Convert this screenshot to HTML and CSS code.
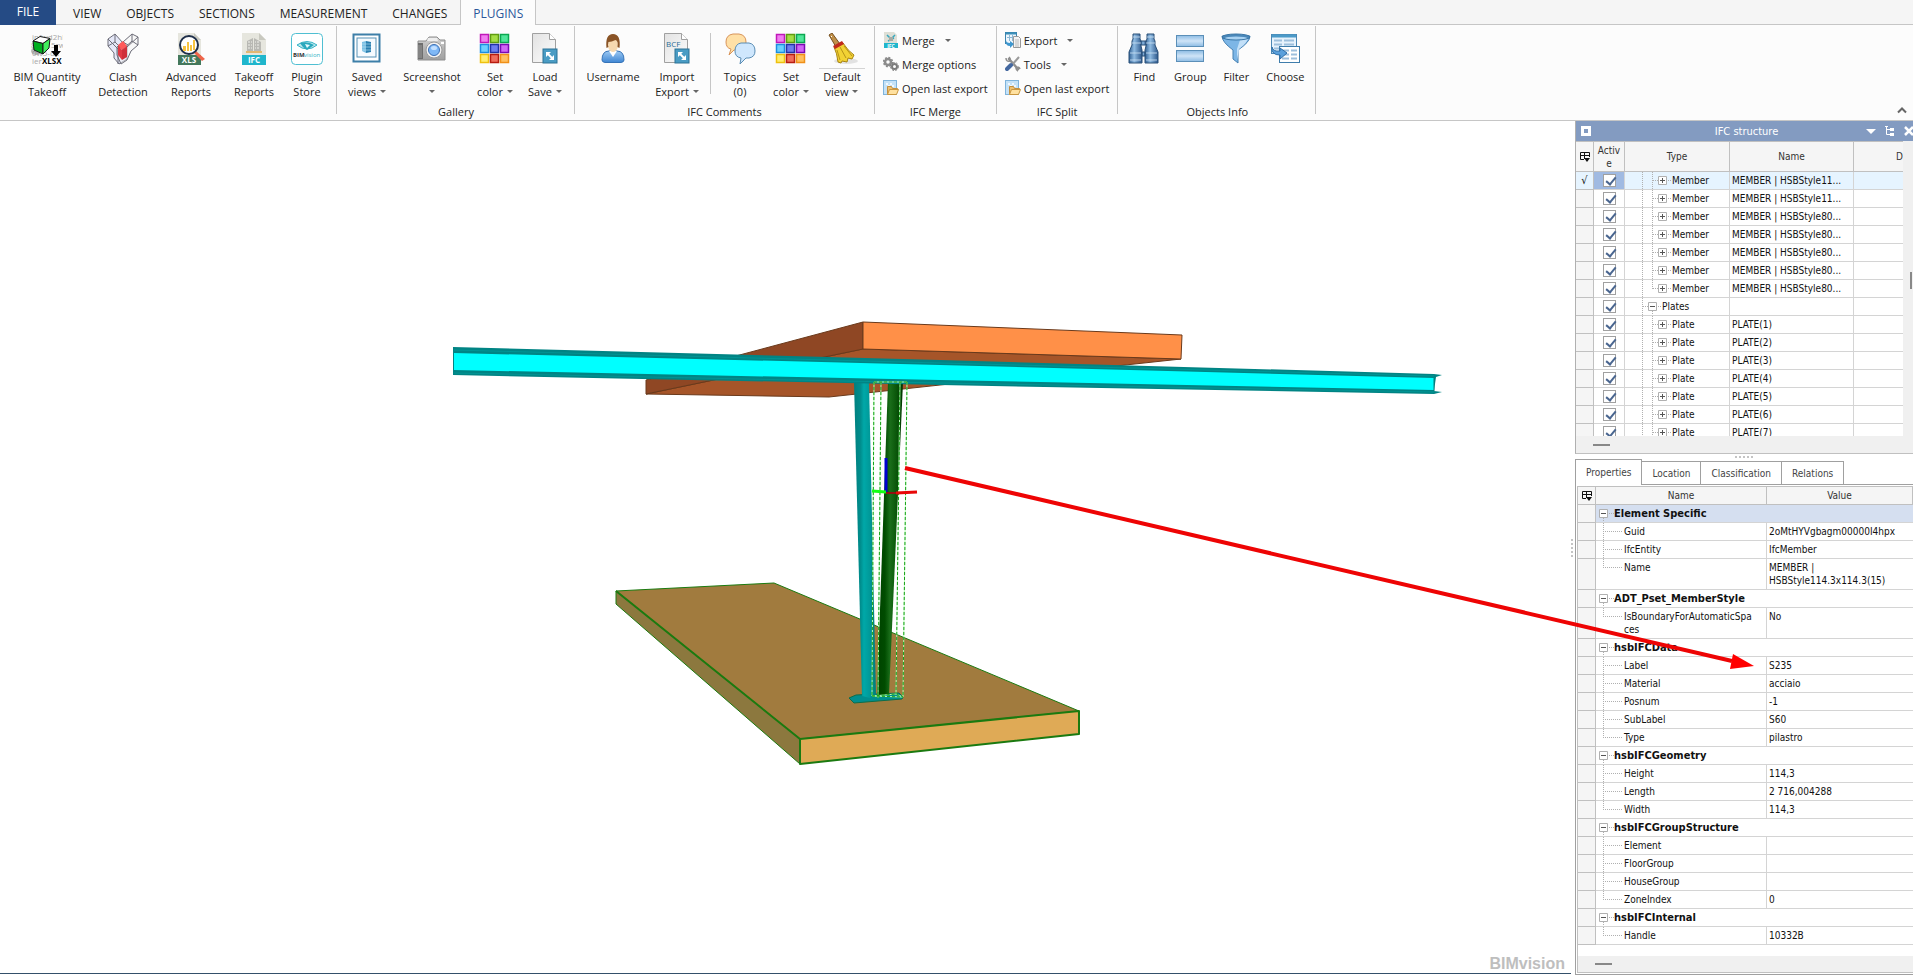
FILE: index.html
```html
<!DOCTYPE html>
<html lang="en">
<head>
<meta charset="utf-8">
<title>BIMvision</title>
<link rel="stylesheet" href="styles.css">
</head>
<body>
<svg class="defs" aria-hidden="true">
  <defs>
    <linearGradient id="blue" x1="0" y1="0" x2="0" y2="1"><stop offset="0" stop-color="#8dbce4"/><stop offset=".5" stop-color="#cfe4f7"/><stop offset="1" stop-color="#8dbce4"/></linearGradient>
    <linearGradient id="steel" x1="0" y1="0" x2="1" y2="0"><stop offset="0" stop-color="#2f5f93"/><stop offset=".4" stop-color="#8fbbe2"/><stop offset="1" stop-color="#2b568a"/></linearGradient>
    <linearGradient id="paper" x1="0" y1="0" x2="1" y2="1"><stop offset="0" stop-color="#e2e2e2"/><stop offset="1" stop-color="#fdfdfd"/></linearGradient>
    <linearGradient id="metal" x1="0" y1="0" x2="0" y2="1"><stop offset="0" stop-color="#d6d6d6"/><stop offset=".5" stop-color="#b4b4b4"/><stop offset="1" stop-color="#a0a0a0"/></linearGradient>
    <linearGradient id="shirt" x1="0" y1="0" x2="0" y2="1"><stop offset="0" stop-color="#9cc9f3"/><stop offset="1" stop-color="#3f86d3"/></linearGradient>
    <linearGradient id="tube" x1="0" y1="0" x2="1" y2="0"><stop offset="0" stop-color="#00807f"/><stop offset=".3" stop-color="#008e8e"/><stop offset=".45" stop-color="#00a8a8"/><stop offset=".7" stop-color="#009a9a"/><stop offset="1" stop-color="#007c7c"/></linearGradient>
    <linearGradient id="greentube" x1="0" y1="0" x2="1" y2="0"><stop offset="0" stop-color="#004200"/><stop offset=".3" stop-color="#004c00"/><stop offset=".5" stop-color="#1a6e1a"/><stop offset=".75" stop-color="#0a560a"/><stop offset="1" stop-color="#003400"/></linearGradient>

    <symbol id="i-quantity" viewBox="0 0 32 32">
      <g font-family="Open Sans, sans-serif" font-size="8" fill="#a8a8a8"><text x="1" y="7">infwd2hK</text><text x="0" y="15">8d</text><text x="20" y="15">5rw</text><text x="1" y="23">0w5-dk</text><text x="1" y="31">ierj</text></g>
      <ellipse cx="5" cy="18" rx="5" ry="4" fill="#777" opacity=".5"/>
      <path d="M2 8 9 3.500 19 5.500 12 10.500z" fill="#fff" stroke="#1a1a1a"/>
      <path d="M2 8 12 10.500V21L3 17z" fill="#00b020" stroke="#1a1a1a"/>
      <path d="M12 10.500 19 5.500 18 15 12 21z" fill="#42f05c" stroke="#1a1a1a"/>
      <path d="M23 12h4v6h3l-5 6-5-6h3z" fill="#000"/>
      <text x="11" y="31" font-family="Open Sans, sans-serif" font-size="8" font-weight="700" fill="#000" stroke="#fff" stroke-width="2" paint-order="stroke">XLSX</text>
    </symbol>
    <symbol id="i-clash" viewBox="0 0 32 32">
      <g stroke="#6d6d78" stroke-linejoin="round" fill="#dfe2f6" fill-opacity=".8">
        <path d="M1 6 8 1 16 10 20 14V26L12 31 7 25V20L1 13z"/>
        <path d="M31 4 25 1 16 9 10 14V22L14 31 20 27 24 18 31 12z" fill="#f4f4f4" fill-opacity=".5"/>
        <path d="M1 6 11 16V31M8 1V9L1 13M11 16 16 10M31 4 20 14M25 1V8L31 12M25 8 15 17M16 9 21 12M8 9 16 17" fill="none"/>
      </g>
      <path d="M11 12 16 8 20 13 15 17z" fill="#ff5a5a"/><path d="M11 12 15 17V27L11 22z" fill="#e03a44"/><path d="M15 17 20 13V24L15 27z" fill="#cf2f3a"/>
    </symbol>
    <symbol id="i-xls" viewBox="0 0 32 32">
      <path d="M3 0h16l7 7v25H3z" fill="#e6e6de"/><path d="M19 0v7h7z" fill="#c9c9c0"/>
      <rect x="3" y="22" width="23" height="10" fill="#44785c"/>
      <path d="m21 18 9 8-3 2-8-8z" fill="#f0654a"/>
      <circle cx="14" cy="12" r="9" fill="#fff" stroke="#1f2f4a" stroke-width="2"/>
      <path d="M8 13h3v5H8zm4-4h2v9h-2zm3 3h2v6h-2zm3-5h2v10h-2z" fill="#f6c341"/>
      <text x="14" y="30" font-family="Open Sans, sans-serif" font-size="8" font-weight="700" text-anchor="middle" fill="#fff">XLS</text>
    </symbol>
    <symbol id="i-ifc" viewBox="0 0 32 32">
      <path d="M4 0h17l7 7v25H4z" fill="#e6e6de"/><path d="M21 0v7h7z" fill="#c9c9c0"/>
      <path d="M9 8 15 5v13H9zM16 5l7 4v9h-7z" fill="#b9b9b4"/>
      <path d="M10 9h2m1 0h1m-4 3h2m1 0h1m-4 3h2m1 0h1m3-6h1m1 0h2m-4 3h1m1 0h2m-4 3h1m1 0h2" stroke="#f1f1ec" fill="none"/>
      <path d="M8 18h16v2H8z" fill="#e2b872"/>
      <rect x="4" y="22" width="24" height="10" fill="#20b6cc"/>
      <text x="16" y="30" font-family="Open Sans, sans-serif" font-size="8" font-weight="700" text-anchor="middle" fill="#fff">IFC</text>
    </symbol>
    <symbol id="i-store" viewBox="0 0 32 32">
      <rect x=".5" y=".5" width="31" height="31" rx="4" fill="#fff" stroke="#4fbfd2"/>
      <path d="M6 12q10-7 20 0-10 8-20 0z" fill="#bfe8ee" stroke="#35b3c6"/><path d="M9 10q8-2 14 2l-7 5q-5-3-7-7z" fill="#2aa8bd"/><path d="m14 11 5 1-3 3z" fill="#e8fafc"/>
      <text x="2" y="24" font-family="Open Sans, sans-serif" font-size="6" font-weight="700" fill="#333">BIM</text><text x="13" y="24" font-family="Open Sans, sans-serif" font-size="6" fill="#35b3c6">vision</text>
    </symbol>
    <symbol id="i-views" viewBox="0 0 32 32">
      <rect x="2.500" y="1.500" width="26" height="27" fill="#fff" stroke="#3d7fa8" stroke-width="2"/><rect x="6" y="5" width="19" height="19" fill="#f6fbff" stroke="#5691b5"/>
      <path d="m11 9 4-1v12l-4-2z" fill="#7cc0e4"/><path d="m15 8 5 1v10l-5 1z" fill="#2a7fb0"/><path d="M11 11h9m-9 3h9m-9 3h9" stroke="#bfe2f2" stroke-width=".6"/>
    </symbol>
    <symbol id="i-camera" viewBox="0 0 32 32">
      <path d="M2 8h8l3-4h8l3 3h5v20H2z" fill="url(#metal)" stroke="#8d8d8d"/><rect x="2" y="10" width="5" height="16" fill="#6e6e6e"/><path d="M3 12v13m2-13v13" stroke="#999"/>
      <path d="M12 5h9l1 3H11z" fill="#eee"/><circle cx="18" cy="17" r="8" fill="#f2f2f2" stroke="#9a9a9a"/><circle cx="18" cy="17" r="5.500" fill="#7fb8f6" stroke="#3c6fb4"/><ellipse cx="18" cy="15" rx="3" ry="2" fill="#c3e0ff"/><path d="M25 9h3v2h-3z" fill="#fff"/>
    </symbol>
    <symbol id="i-color" viewBox="0 0 32 32">
      <g stroke-width="1.500">
      <rect x="1.500" y="1.500" width="8" height="8" fill="#f07cf0" stroke="#c018b8"/><rect x="11.500" y="1.500" width="8" height="8" fill="#a4de44" stroke="#5f9c10"/><rect x="21.500" y="1.500" width="8" height="8" fill="#4fe69a" stroke="#0aa850"/>
      <rect x="1.500" y="11.500" width="8" height="8" fill="#6cd0ff" stroke="#1c8ee0"/><rect x="11.500" y="11.500" width="8" height="8" fill="#6c7cf0" stroke="#2232a8"/><rect x="21.500" y="11.500" width="8" height="8" fill="#cf66f6" stroke="#7a0ab4"/>
      <rect x="1.500" y="21.500" width="8" height="8" fill="#ffee70" stroke="#eec010"/><rect x="11.500" y="21.500" width="8" height="8" fill="#f06c5c" stroke="#b81c10"/><rect x="21.500" y="21.500" width="8" height="8" fill="#ffc060" stroke="#f09018"/></g>
    </symbol>
    <symbol id="i-load" viewBox="0 0 32 32">
      <path d="M3.500.5h17l6 6v23h-23z" fill="url(#paper)" stroke="#a0a0a0"/><path d="M20.500.5v6h6" fill="#fff" stroke="#a0a0a0"/>
      <rect x="14" y="16" width="14" height="14" fill="#4a9cc4" stroke="#2d7396"/><path d="M17 24v-5h5zm8-2v5h-5z" fill="#fff"/><path d="m19 21 4 4" stroke="#fff" stroke-width="2"/>
    </symbol>
    <symbol id="i-bcf" viewBox="0 0 32 32">
      <path d="M3.500.5h17l6 6v23h-23z" fill="url(#paper)" stroke="#a0a0a0"/><path d="M20.500.5v6h6" fill="#fff" stroke="#a0a0a0"/>
      <text x="5" y="14" font-family="Open Sans, sans-serif" font-size="8" fill="#2d6d96">BCF</text>
      <rect x="14" y="16" width="14" height="14" fill="#4a9cc4" stroke="#2d7396"/><path d="M17 24v-5h5zm8-2v5h-5z" fill="#fff"/><path d="m19 21 4 4" stroke="#fff" stroke-width="2"/>
    </symbol>
    <symbol id="i-user" viewBox="0 0 32 32">
      <path d="M5 27q0-9 7-9h8q7 0 7 9 0 2-3 2.500H8Q5 29 5 27z" fill="url(#shirt)" stroke="#3774b8"/><path d="m12 18 4 6 4-6z" fill="#fff"/>
      <ellipse cx="16" cy="12" rx="5" ry="7" fill="#f6d9b0"/><path d="M9.500 15Q8 1 16 1t6.500 14l-2-1q1-6-2-7-4 2-7 2-1 3 0 5z" fill="#8a5426"/>
    </symbol>
    <symbol id="i-topics" viewBox="0 0 32 32">
      <path d="M9 1h6q7 1 7 8t-7 8h-5l-5 5 2-6q-5-1-5-7 0-7 7-8z" fill="#ffe0a6" stroke="#d8945a"/>
      <path d="M17 10h8q6 1 6 8 0 6-6 7h-3l-6 6 1-6q-6-1-6-7 0-7 6-8z" fill="#cfe7fd" stroke="#5a8db4"/>
    </symbol>
    <symbol id="i-broom" viewBox="0 0 32 32">
      <ellipse cx="20" cy="28" rx="12" ry="3" fill="#000" opacity=".1"/>
      <path d="m3 2 3-2 8 11-4 3z" fill="#c09048" stroke="#765020"/><path d="m5 3 1 1" stroke="#fff"/>
      <path d="m8 14 9-4q5 8 11 12l-2 4-4-1-1 4-5-1-1 2-3-1q-1-9-4-15z" fill="#f2d234" stroke="#a88410"/><path d="m11 17 3 10m0-13 6 11m-2-12 8 10" stroke="#b89418" fill="none"/><path d="m7 13 9-5 2 3-9 5z" fill="#c02a1c"/>
    </symbol>
    <symbol id="i-find" viewBox="0 0 32 32">
      <g fill="url(#steel)" stroke="#2a5078"><path d="M5 1h7v5l1 2v5l1 4v13H1V19l3-7V8l1-2z"/><path d="M19 1h7v5l1 2v4l3 7v11H17V17l1-4V8l1-2z"/><rect x="13" y="8" width="5" height="4"/><rect x="14" y="19" width="3" height="4"/></g>
      <path d="M2 20h11M2 27h11m5-7h11m-11 7h11M4 10h9m5 0h9M5 4h7m7 0h7" stroke="#cfe4f6" opacity=".8"/>
    </symbol>
    <symbol id="i-group" viewBox="0 0 32 32"><rect x="2.500" y="2.500" width="27" height="11" fill="url(#blue)" stroke="#5b8fb8"/><rect x="2.500" y="17.500" width="27" height="11" fill="url(#blue)" stroke="#5b8fb8"/></symbol>
    <symbol id="i-filter" viewBox="0 0 32 32"><path d="M2 3q0 6 11 14v9l5 4V17Q30 9 30 3z" fill="#7db6e6" stroke="#4580b2"/><path d="M19 16Q28 9 28 5l-8 2-3 9v11z" fill="#c3e0f8"/><ellipse cx="16" cy="4" rx="14" ry="3" fill="#4a88ba" stroke="#3a76a6"/><ellipse cx="16" cy="5" rx="11" ry="1.500" fill="#a9d2f2"/></symbol>
    <symbol id="i-choose" viewBox="0 0 32 32">
      <rect x="2.500" y="1.500" width="25" height="19" fill="#e6f2fc" stroke="#4b87b4"/><path d="M3 3h24" stroke="#4b9ac8" stroke-width="3"/><path d="M5 7.500h8m2 0h10m-20 4h8m2 0h10m-20 4h8m2 0h10" stroke="#9dbfdc" stroke-width="2"/>
      <rect x="10.500" y="13.500" width="20" height="16" fill="#fff" stroke="#3f7dab"/><path d="M13 17.500h7m2 0h6m-15 4h7m2 0h6m-15 4h7m2 0h6" stroke="#9dbfdc" stroke-width="2"/>
      <path d="M3 14q1 5 8 4v-3l7 5-7 6v-4q-9 0-8-8z" fill="#5aa0dc" stroke="#2f6fa8"/>
    </symbol>
    <symbol id="i-merge" viewBox="0 0 16 16"><path d="M1 0h10l3 3v13H1z" fill="#dedfd6"/><path d="m4 3 3 3m5-3L9 6M5 9l6-3" stroke="#38a9bf" stroke-width="1.500"/><rect x="6" y="5" width="4" height="4" fill="#a7aaa4"/><rect x="1" y="11" width="14" height="5" fill="#20b6cc"/><text x="8" y="16" text-anchor="middle" font-family="Open Sans, sans-serif" font-size="5" font-weight="700" fill="#fff">IFC</text></symbol>
    <symbol id="i-gears" viewBox="0 0 16 16"><g fill="none" stroke="#8c8c8c"><circle cx="5" cy="6" r="3" stroke-width="2.500"/><circle cx="5" cy="6" r="4.500" stroke-width="1.500" stroke-dasharray="2 1.500"/><circle cx="11.500" cy="10.500" r="2.500" stroke-width="2" stroke="#7c7c7c"/><circle cx="11.500" cy="10.500" r="4" stroke="#7c7c7c" stroke-dasharray="2 1.300"/></g></symbol>
    <symbol id="i-open" viewBox="0 0 16 16"><rect x=".5" y=".5" width="13" height="14" fill="#c5e2f7" stroke="#7fb4dc"/><path d="M3 3h2v2H3zm4 0h2v2H7zM5 5h2v2H5zm4 0h2v2H9z" fill="#f0f8ff"/><path d="M4.500 14.500v-8h4l1 2h5v2" fill="#eec070" stroke="#c58f3c"/><path d="m4.500 14.500 2-5h9l-2 5z" fill="#ffe1a0" stroke="#c9963f"/></symbol>
    <symbol id="i-export" viewBox="0 0 16 16"><rect x=".5" y=".5" width="11" height="11" fill="#edf6fd" stroke="#3b84ae"/><path d="M1 1.500h10" stroke="#3b8fb8" stroke-width="2"/><path d="M2 5.500h8M4.500 3v6m3-6v6" stroke="#8db8d4"/><path d="M8.500 4.500h5l2 2v9h-7z" fill="#f4f4f4" stroke="#999"/><path d="M10 8h4m-4 2h4m-4 2h4m-4 2h4" stroke="#bbb"/><path d="M1 8q0 3 4 3V9l4 3-4 4v-2q-5 0-4-6z" fill="#3f97cf"/></symbol>
    <symbol id="i-tools" viewBox="0 0 16 16"><path d="M4 3 13 13" stroke="#8e8e8e" stroke-width="2.500" stroke-linecap="round"/><path d="M1 2q0 4 4 3 1-2-1-4M15 13q-1-3-4-1 0 2 2 3" fill="none" stroke="#8e8e8e" stroke-width="1.500"/><path d="m14 1-8 9" stroke="#9b9b9b" stroke-width="2"/><path d="m6 9-4 4" stroke="#4468a0" stroke-width="4" stroke-linecap="round"/></symbol>

    <symbol id="t-plus" viewBox="0 0 46 18"><path d="M16.500 0v18M26.500 0v18M27 8.500h5m10 0h4" class="guide"/><path d="M32.500 4.500h8v8h-8z" class="box"/><path d="M34 8.500h5m-2.500-2.500v5" class="sign"/></symbol>
    <symbol id="t-plus-last" viewBox="0 0 46 18"><path d="M16.500 0v18M26.500 0v9M27 8.500h5m10 0h4" class="guide"/><path d="M32.500 4.500h8v8h-8z" class="box"/><path d="M34 8.500h5m-2.500-2.500v5" class="sign"/></symbol>
    <symbol id="t-minus" viewBox="0 0 36 18"><path d="M16.500 0v18M26.500 13v5M17 8.500h5m10 0h4" class="guide"/><path d="M22.500 4.500h8v8h-8z" class="box"/><path d="M24 8.500h5" class="sign"/></symbol>
    <symbol id="p-minus" viewBox="0 0 18 18"><path d="M7.500 13v5M13 8.500h5" class="guide"/><path d="M3.500 4.500h8v8h-8z" class="box"/><path d="M5 8.500h5" class="sign"/></symbol>
    <symbol id="i-cols" viewBox="0 0 10 10"><path d="M4 7.500H.5v-7h9V5M.5 3.500h9M4.500 1v6" fill="none" stroke="#111"/><path d="M4 6h6L7 10z" fill="#111"/></symbol>
  </defs>
</svg>

<nav class="tabs" aria-label="Ribbon tabs">
  <button class="tab file">FILE</button>
  <button class="tab">VIEW</button>
  <button class="tab">OBJECTS</button>
  <button class="tab">SECTIONS</button>
  <button class="tab">MEASUREMENT</button>
  <button class="tab">CHANGES</button>
  <button class="tab active">PLUGINS</button>
</nav>

<header class="ribbon">
  <section class="group pad-m">
    <div class="tools">
      <button class="tool w84"><svg><use href="#i-quantity"/></svg><span>BIM Quantity<br>Takeoff</span></button>
      <button class="tool w68"><svg><use href="#i-clash"/></svg><span>Clash<br>Detection</span></button>
      <button class="tool w68"><svg><use href="#i-xls"/></svg><span>Advanced<br>Reports</span></button>
      <button class="tool w58"><svg><use href="#i-ifc"/></svg><span>Takeoff<br>Reports</span></button>
      <button class="tool w48"><svg><use href="#i-store"/></svg><span>Plugin<br>Store</span></button>
    </div>
  </section>
  <section class="group pad-s">
    <div class="tools">
      <button class="tool w52"><svg><use href="#i-views"/></svg><span>Saved<br>views<i class="caret"></i></span></button>
      <button class="tool w78"><svg><use href="#i-camera"/></svg><span>Screenshot<br><i class="caret alone"></i></span></button>
      <button class="tool w48"><svg><use href="#i-color"/></svg><span>Set<br>color<i class="caret"></i></span></button>
      <button class="tool w52"><svg><use href="#i-load"/></svg><span>Load<br>Save<i class="caret"></i></span></button>
    </div>
    <h2>Gallery</h2>
  </section>
  <section class="group pad-m">
    <div class="tools">
      <button class="tool w66"><svg><use href="#i-user"/></svg><span>Username</span></button>
      <button class="tool w62"><svg><use href="#i-bcf"/></svg><span>Import<br>Export<i class="caret"></i></span></button>
      <span class="rule"></span>
      <button class="tool w54"><svg><use href="#i-topics"/></svg><span>Topics<br>(0)</span></button>
      <button class="tool w48"><svg><use href="#i-color"/></svg><span>Set<br>color<i class="caret"></i></span></button>
      <button class="tool w54 split"><svg><use href="#i-broom"/></svg><span>Default<br>view<i class="caret"></i></span></button>
    </div>
    <h2>IFC Comments</h2>
  </section>
  <section class="group pad-l">
    <div class="list">
      <button class="item"><svg><use href="#i-merge"/></svg>Merge<i class="caret far"></i></button>
      <button class="item"><svg><use href="#i-gears"/></svg>Merge options</button>
      <button class="item"><svg><use href="#i-open"/></svg>Open last export</button>
    </div>
    <h2>IFC Merge</h2>
  </section>
  <section class="group pad-l">
    <div class="list">
      <button class="item"><svg><use href="#i-export"/></svg>Export<i class="caret far"></i></button>
      <button class="item"><svg><use href="#i-tools"/></svg>Tools<i class="caret far"></i></button>
      <button class="item"><svg><use href="#i-open"/></svg>Open last export</button>
    </div>
    <h2>IFC Split</h2>
  </section>
  <section class="group pad-s">
    <div class="tools">
      <button class="tool w44"><svg><use href="#i-find"/></svg><span>Find</span></button>
      <button class="tool w48"><svg><use href="#i-group"/></svg><span>Group</span></button>
      <button class="tool w44"><svg><use href="#i-filter"/></svg><span>Filter</span></button>
      <button class="tool w54"><svg><use href="#i-choose"/></svg><span>Choose</span></button>
    </div>
    <h2>Objects Info</h2>
  </section>
  <button class="collapse" aria-label="Collapse ribbon"><svg viewBox="0 0 10 8"><path d="M1 6.500 5 2.500l4 4" fill="none" stroke="#666" stroke-width="2"/></svg></button>
</header>

<main class="work">
  <section class="viewport" aria-label="3D view">
    <svg class="scene" width="1571" height="850" viewBox="0 121 1571 850" role="img" aria-label="Steel frame on a slab">
      <g stroke="#6a3a1c" stroke-width="1" stroke-linejoin="round">
        <path d="M863 349 646 394 829 397 1181 359z" fill="#a65529"/>
        <path d="M863 322 646 380v14L863 349z" fill="#8f4724"/>
        <path d="M863 322l319 13-1 24-318-10z" fill="#ff9048"/>
      </g>
      <g stroke="#1b7a10" stroke-width="2" stroke-linejoin="round">
        <path d="M616 591 774 583 1079 711 800 739z" fill="#a17b3e" stroke-width="1"/>
        <path d="M616 591v13L800 764V739z" fill="#8c783e" stroke-width="1"/>
        <path d="M800 739 1079 711v23L800 764z" fill="#dfaa56"/>
        <path d="M616 591 800 739" fill="none"/>
      </g>
      <path d="M849 698 856 695 899 693 903 697 902 699 854 703z" fill="#008f8f" stroke="#0b6e4c"/>
      <path d="M854 382h15l7 314-6 2-8-2z" fill="url(#tube)"/>
      <path d="M888 382h15L889 695H877z" fill="url(#greentube)"/>
      <path d="M453 347 940 360 1434 374 1442 375 1436 377 1434 391 1442 392 1434 394 940 385 453 375z" fill="#008484"/>
      <path d="M454 353 940 365 1434 378V390L940 380 454 370z" fill="#00ffff"/>
      <path d="M454 373 940 383 1434 392M454 350l486 13 494 13" stroke="#009494" fill="none"/>
      <path d="M1434 378v13" stroke="#087878"/>
      <g fill="none" stroke="#b4ffb4" stroke-width="1"><path d="M874 382h33M874 382 872 696M881 382 878 698M900 382 896 694M907 382 903 697M872 696 903 697 896 694 872 696"/></g>
      <g fill="none" stroke="#18a018" stroke-width="1" stroke-dasharray="3 2"><path d="M874 382h33M874 382 872 696M881 382 878 698M900 382 896 694M907 382 903 697M872 696 903 697 896 694 872 696"/></g>
      <path d="M886 458v34" stroke="#0000d0" stroke-width="3"/><path d="M872 491l14 1" stroke="#14ff14" stroke-width="3"/><path d="M886 493h10" stroke="#901010" stroke-width="2"/><path d="M896 493l21-1" stroke="#e80808" stroke-width="3"/>
    </svg>
    <span class="watermark">BIMvision</span>
  </section>
  <div class="gutter"><i class="grip"></i></div>

  <aside class="dock">
    <section class="structure">
      <header class="title"><i class="pin"></i><h1>IFC structure</h1>
        <button aria-label="Menu"><svg viewBox="0 0 10 10"><path d="M0 3h10L5 8z" fill="#fff"/></svg></button>
        <button aria-label="Tree"><svg viewBox="0 0 10 10"><path d="M1.500 0v8.500H5M1.500 3.500H5" fill="none" stroke="#fff"/><path d="M5 2h4v3H5zm0 5h4v3H5zM0 0h3v1H0z" fill="#fff"/></svg></button>
        <button aria-label="Close"><svg viewBox="0 0 10 10"><path d="m1 1 8 8m0-8L1 9" stroke="#fff" stroke-width="2.500"/></svg></button>
      </header>
      <div class="scroller">
        <table class="tree">
          <colgroup><col class="c-mark"><col class="c-act"><col class="c-type"><col class="c-name"><col></colgroup>
          <thead><tr><th><svg class="cols"><use href="#i-cols"/></svg></th><th class="wrap">Active</th><th>Type</th><th>Name</th><th class="last">D</th></tr></thead>
          <tbody>
            <tr class="sel"><td>√</td><td><input type="checkbox" checked aria-label="Active"></td><td><button class="exp" aria-label="Expand"><svg><use href="#t-plus"/></svg></button>Member</td><td>MEMBER | HSBStyle11...</td><td></td></tr>
            <tr><td></td><td><input type="checkbox" checked aria-label="Active"></td><td><button class="exp" aria-label="Expand"><svg><use href="#t-plus"/></svg></button>Member</td><td>MEMBER | HSBStyle11...</td><td></td></tr>
            <tr><td></td><td><input type="checkbox" checked aria-label="Active"></td><td><button class="exp" aria-label="Expand"><svg><use href="#t-plus"/></svg></button>Member</td><td>MEMBER | HSBStyle80...</td><td></td></tr>
            <tr><td></td><td><input type="checkbox" checked aria-label="Active"></td><td><button class="exp" aria-label="Expand"><svg><use href="#t-plus"/></svg></button>Member</td><td>MEMBER | HSBStyle80...</td><td></td></tr>
            <tr><td></td><td><input type="checkbox" checked aria-label="Active"></td><td><button class="exp" aria-label="Expand"><svg><use href="#t-plus"/></svg></button>Member</td><td>MEMBER | HSBStyle80...</td><td></td></tr>
            <tr><td></td><td><input type="checkbox" checked aria-label="Active"></td><td><button class="exp" aria-label="Expand"><svg><use href="#t-plus"/></svg></button>Member</td><td>MEMBER | HSBStyle80...</td><td></td></tr>
            <tr><td></td><td><input type="checkbox" checked aria-label="Active"></td><td><button class="exp" aria-label="Expand"><svg><use href="#t-plus-last"/></svg></button>Member</td><td>MEMBER | HSBStyle80...</td><td></td></tr>
            <tr><td></td><td><input type="checkbox" checked aria-label="Active"></td><td><button class="exp open" aria-label="Collapse"><svg><use href="#t-minus"/></svg></button>Plates</td><td></td><td></td></tr>
            <tr><td></td><td><input type="checkbox" checked aria-label="Active"></td><td><button class="exp" aria-label="Expand"><svg><use href="#t-plus"/></svg></button>Plate</td><td>PLATE(1)</td><td></td></tr>
            <tr><td></td><td><input type="checkbox" checked aria-label="Active"></td><td><button class="exp" aria-label="Expand"><svg><use href="#t-plus"/></svg></button>Plate</td><td>PLATE(2)</td><td></td></tr>
            <tr><td></td><td><input type="checkbox" checked aria-label="Active"></td><td><button class="exp" aria-label="Expand"><svg><use href="#t-plus"/></svg></button>Plate</td><td>PLATE(3)</td><td></td></tr>
            <tr><td></td><td><input type="checkbox" checked aria-label="Active"></td><td><button class="exp" aria-label="Expand"><svg><use href="#t-plus"/></svg></button>Plate</td><td>PLATE(4)</td><td></td></tr>
            <tr><td></td><td><input type="checkbox" checked aria-label="Active"></td><td><button class="exp" aria-label="Expand"><svg><use href="#t-plus"/></svg></button>Plate</td><td>PLATE(5)</td><td></td></tr>
            <tr><td></td><td><input type="checkbox" checked aria-label="Active"></td><td><button class="exp" aria-label="Expand"><svg><use href="#t-plus"/></svg></button>Plate</td><td>PLATE(6)</td><td></td></tr>
            <tr><td></td><td><input type="checkbox" checked aria-label="Active"></td><td><button class="exp" aria-label="Expand"><svg><use href="#t-plus"/></svg></button>Plate</td><td>PLATE(7)</td><td></td></tr>
          </tbody>
        </table>
        <div class="vbar"><i></i></div>
      </div>
      <div class="hbar"><i></i></div>
    </section>
    <div class="divider"><i class="grip flat"></i></div>
    <section class="details">
      <nav class="subtabs"><button class="on">Properties</button><button>Location</button><button>Classification</button><button>Relations</button></nav>
      <div class="sheet">
        <table class="props">
          <colgroup><col class="c-mark"><col class="c-key"><col></colgroup>
          <thead><tr><th><svg class="cols"><use href="#i-cols"/></svg></th><th>Name</th><th>Value</th></tr></thead>
          <tbody>
            <tr class="cat hot"><td></td><td colspan="2"><button class="exp cat-exp" aria-label="Collapse"><svg><use href="#p-minus"/></svg></button>Element Specific</td></tr>
            <tr><td></td><td class="key">Guid</td><td>2oMtHYVgbagm00000I4hpx</td></tr>
            <tr><td></td><td class="key">IfcEntity</td><td>IfcMember</td></tr>
            <tr class="tall"><td></td><td class="key end">Name</td><td>MEMBER |<br>HSBStyle114.3x114.3(15)</td></tr>
            <tr class="cat"><td></td><td colspan="2"><button class="exp cat-exp" aria-label="Collapse"><svg><use href="#p-minus"/></svg></button>ADT_Pset_MemberStyle</td></tr>
            <tr class="tall"><td></td><td class="key end">IsBoundaryForAutomaticSpa<br>ces</td><td>No</td></tr>
            <tr class="cat"><td></td><td colspan="2"><button class="exp cat-exp" aria-label="Collapse"><svg><use href="#p-minus"/></svg></button>hsbIFCData</td></tr>
            <tr><td></td><td class="key">Label</td><td>S235</td></tr>
            <tr><td></td><td class="key">Material</td><td>acciaio</td></tr>
            <tr><td></td><td class="key">Posnum</td><td>-1</td></tr>
            <tr><td></td><td class="key">SubLabel</td><td>S60</td></tr>
            <tr><td></td><td class="key end">Type</td><td>pilastro</td></tr>
            <tr class="cat"><td></td><td colspan="2"><button class="exp cat-exp" aria-label="Collapse"><svg><use href="#p-minus"/></svg></button>hsbIFCGeometry</td></tr>
            <tr><td></td><td class="key">Height</td><td>114,3</td></tr>
            <tr><td></td><td class="key">Length</td><td>2 716,004288</td></tr>
            <tr><td></td><td class="key end">Width</td><td>114,3</td></tr>
            <tr class="cat"><td></td><td colspan="2"><button class="exp cat-exp" aria-label="Collapse"><svg><use href="#p-minus"/></svg></button>hsbIFCGroupStructure</td></tr>
            <tr><td></td><td class="key">Element</td><td></td></tr>
            <tr><td></td><td class="key">FloorGroup</td><td></td></tr>
            <tr><td></td><td class="key">HouseGroup</td><td></td></tr>
            <tr><td></td><td class="key end">ZoneIndex</td><td>0</td></tr>
            <tr class="cat"><td></td><td colspan="2"><button class="exp cat-exp" aria-label="Collapse"><svg><use href="#p-minus"/></svg></button>hsbIFCInternal</td></tr>
            <tr><td></td><td class="key end">Handle</td><td>10332B</td></tr>
          </tbody>
        </table>
        <div class="hbar low"><i></i></div>
      </div>
    </section>
  </aside>

  <svg class="arrow" width="1013" height="560" viewBox="900 121 1013 560" aria-hidden="true"><path d="M905 468 1732 661" stroke="#ee0404" stroke-width="4"/><path d="M1733 654 1754 666 1730 669z" fill="#ff0000"/></svg>
</main>
</body>
</html>
```
FILE: styles.css
```css
* { box-sizing: border-box; }
body { margin: 0; height: 100vh; display: flex; flex-direction: column; overflow: hidden; background: #fff; color: #222; font: 11px/15px "Open Sans", sans-serif; }
button { border: 0; margin: 0; padding: 0; background: none; color: inherit; font: inherit; }
svg { display: block; flex: none; }
.defs { position: absolute; width: 0; height: 0; }
h1, h2 { margin: 0; font: inherit; }

.tabs { display: flex; flex: none; gap: 1px; height: 25px; background: #f5f5f5; border-bottom: 1px solid #c6c6c6; font-size: 12px; }
.tab { padding: 2px 12px 0; height: 24px; }
.tab.file { width: 56px; height: 25px; padding: 0 0 2px; background: #254b85; color: #fff; margin-right: 4px; }
.tab.active { height: 25px; background: #fcfcfc; color: #2b579a; border: 1px solid #c6c6c6; border-width: 0 1px; }

.ribbon { position: relative; display: flex; flex: none; height: 96px; background: #fcfcfc; border-bottom: 1px solid #c6c6c6; }
.group { display: flex; flex-direction: column; justify-content: space-between; height: 88px; margin-top: 1px; border-right: 1px solid #c6c6c6; }
.group h2 { text-align: center; margin-bottom: -5px; }
.pad-s { padding-left: 4px; padding-right: 3px; }
.pad-m { padding-left: 5px; padding-right: 5px; }
.pad-l { padding-left: 8px; padding-right: 8px; }
.tools { display: flex; align-items: flex-start; padding-top: 7px; }
.tool { display: flex; flex-direction: column; align-items: center; gap: 4px; white-space: nowrap; }
.tool svg { width: 32px; height: 32px; }
.tool.split span { border-top: 1px solid #d4d4d4; margin-top: -1px; padding: 0 4px; }
.w44 { width: 44px; } .w48 { width: 48px; } .w52 { width: 52px; } .w54 { width: 54px; } .w58 { width: 58px; }
.w62 { width: 62px; } .w66 { width: 66px; } .w68 { width: 68px; } .w78 { width: 78px; } .w84 { width: 84px; }
.rule { width: 1px; height: 61px; margin: 0 2px; background: #c6c6c6; }
.caret { display: inline-block; margin-left: 4px; border: 3px solid transparent; border-top-color: #666; border-bottom: 0; vertical-align: 3px; }
.caret.alone { margin: 0; }
.caret.far { margin-left: 7px; }
.list { display: flex; flex-direction: column; padding-top: 2px; }
.item { display: flex; align-items: center; height: 24px; gap: 3px; white-space: nowrap; }
.item svg { width: 16px; height: 16px; }
.collapse { position: absolute; right: 6px; bottom: 6px; }
.collapse svg { width: 10px; height: 8px; }

.work { position: relative; display: flex; flex: 1; min-height: 0; }
.viewport { position: relative; flex: 1; min-width: 0; overflow: hidden; margin-bottom: 1px; border-bottom: 1px solid #34506a; }
.watermark { position: absolute; right: 6px; bottom: 0; font: bold 16px/18px "Liberation Sans", sans-serif; color: #bebebe; }
.gutter { display: flex; align-items: center; width: 4px; }
.grip { width: 2px; height: 18px; background: repeating-linear-gradient(#c4c4c4 0 2px, transparent 2px 4px); }
.grip.flat { width: 18px; height: 2px; background: repeating-linear-gradient(90deg, #c4c4c4 0 2px, transparent 2px 4px); }
.arrow { position: absolute; right: 0; top: 0; pointer-events: none; }

.dock { display: flex; flex-direction: column; width: 338px; flex: none; overflow: hidden; font: 10px/13px "DejaVu Sans Condensed", "DejaVu Sans", sans-serif; color: #111; }
.structure { display: flex; flex-direction: column; flex: none; height: 333px; border-left: 1px solid #b0b0b0; border-bottom: 1px solid #c0c0c0; }
.title { display: flex; align-items: center; flex: none; height: 20px; padding-left: 5px; gap: 9px; background: #839bc1; color: #fff; font-size: 11px; margin-right: -1px; }
.title h1 { flex: 1; text-align: center; padding-left: 36px; }
.title svg { width: 10px; height: 10px; }
.pin { width: 10px; height: 10px; border: 3px solid #fff; }
.scroller { display: flex; flex: 1; min-height: 0; overflow: hidden; }
table { border-collapse: separate; border-spacing: 0; table-layout: fixed; }
.tree { flex: 1; width: 0; align-self: flex-start; }
.c-mark { width: 18px; } .c-act { width: 31px; } .c-type { width: 105px; } .c-name { width: 124px; }
th { font-weight: normal; background: #f5f5f5; border: 1px solid #c0c0c0; border-width: 0 1px 1px 0; padding: 0; color: #333; }
.tree th { height: 31px; border-top-width: 1px; }
.tree .last { text-align: right; border-right: 0; }
.tree .wrap { word-break: break-all; padding: 0 3px; }
.cols { width: 10px; height: 10px; margin: 0 auto; }
td { height: 18px; padding: 0 0 0 2px; border: 1px solid #d4d4d4; border-width: 0 1px 1px 0; white-space: nowrap; overflow: hidden; vertical-align: top; line-height: 17px; }
td:first-child { padding: 0; background: #f5f5f5; border-color: #c0c0c0; text-align: center; font-size: 11px; }
td:last-child { border-right: 0; }
.tree td:nth-child(2) { padding: 2px 0 0; }
.tree td:nth-child(3) { padding: 0 0 0 1px; }
.sel td { background: #e6f4ff; }
.sel td:nth-child(2) { background: #a0bae2; }
.exp { float: left; width: 46px; height: 17px; overflow: hidden; }
.exp.open { width: 36px; }
.exp svg { width: 100%; height: 18px; }
.guide { fill: none; stroke: #b0b0b0; stroke-dasharray: 1 1; }
.box { fill: #fff; stroke: #b0b0b0; }
.sign { fill: none; stroke: #555; }
input { appearance: none; display: block; position: relative; width: 13px; height: 13px; margin: 0 auto; border: 1px solid #a0a0a0; background: #fff; }
input:checked::after { content: ""; position: absolute; left: 4px; top: 0; width: 4px; height: 8px; border: solid #4a6690; border-width: 0 2px 2px 0; transform: rotate(40deg); }
.vbar { width: 10px; background: #f0f0f0; padding: 131px 0 0 7px; }
.vbar i { display: block; width: 2px; height: 17px; background: #888; }
.hbar { flex: none; display: flex; align-items: center; height: 17px; padding-left: 17px; background: #f0f0f0; }
.hbar i { width: 17px; height: 2px; background: #888; }
.divider { display: flex; justify-content: center; align-items: center; height: 5px; flex: none; }

.details { display: flex; flex-direction: column; flex: 1; min-height: 0; border-left: 1px solid #a0a0a0; border-bottom: 1px solid #a0a0a0; }
.subtabs { display: flex; align-items: flex-end; height: 26px; flex: none; box-shadow: inset 0 -1px #a0a0a0; color: #444; }
.subtabs button { height: 24px; padding: 0 10px; border: 1px solid #a0a0a0; }
.subtabs button + button { margin-left: -1px; }
.subtabs .on { height: 26px; background: #fff; border-bottom: 0; border-left: 0; }
.sheet { display: flex; flex-direction: column; flex: 1; min-height: 0; margin: 1px 0 1px 1px; border: 1px solid #c0c0c0; border-right: 0; }
.props { width: 100%; }
.props th { height: 18px; }
.c-key { width: 171px; }
.key { padding-left: 28px; background: repeating-linear-gradient(90deg, #b0b0b0 0 1px, transparent 1px 2px) 7px 8px / 19px 1px no-repeat, repeating-linear-gradient(#b0b0b0 0 1px, transparent 1px 2px) 7px 0 / 1px 100% no-repeat; }
.key.end { background-size: 19px 1px, 1px 9px; }
.tall td { height: 31px; line-height: 13px; padding-top: 2px; }
.cat td { font-weight: bold; font-size: 11px; padding-left: 0; }
.cat.hot td + td { background: #d5dff0; }
.cat-exp { width: 18px; }
.low { margin-top: auto; height: 16px; }
```
